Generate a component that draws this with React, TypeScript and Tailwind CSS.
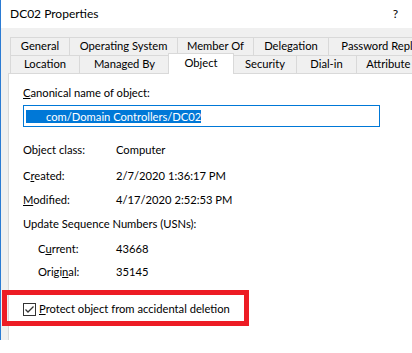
import React from "react";

const ROW1 = [
  { label: "General", w: "w-[60px]" },
  { label: "Operating System", w: "w-[108px]" },
  { label: "Member Of", w: "w-[76px]" },
  { label: "Delegation", w: "w-[75px]" },
  { label: "Password Replication", w: "w-[130px]" },
];

const ROW2_LEFT = [
  { label: "Location", w: "w-[70px]" },
  { label: "Managed By", w: "w-[90px]" },
];

const ROW2_RIGHT = [
  { label: "Security", w: "w-[63px]" },
  { label: "Dial-in", w: "w-[60px]" },
  { label: "Attribute Editor", w: "w-[96px]" },
];

function Tab({ label, w, first }: { label: string; w: string; first?: boolean }) {
  return (
    <div
      className={`${w} h-[18px] shrink-0 border-t border-r border-[#d9d9d9] ${
        first ? "border-l" : ""
      } flex items-center justify-center whitespace-nowrap overflow-hidden`}
    >
      {label}
    </div>
  );
}

function Field({ label, value, indent }: { label: React.ReactNode; value: string; indent?: boolean }) {
  return (
    <div className="flex h-[16px] items-center">
      <div className={`w-[93px] ${indent ? "pl-[15px]" : ""}`}>{label}</div>
      <div>{value}</div>
    </div>
  );
}

export default function App() {
  return (
    <div className="relative w-[412px] h-[353px] overflow-hidden bg-white text-[11.2px] text-black font-['Lato','Liberation_Sans',sans-serif]">
      <div className="h-[340px] border-l border-[#2b7bd3] flex flex-col">
        {/* Title bar */}
        <div className="h-[28px] flex items-center justify-between bg-white pl-[9px] pr-[14px] text-[12px]">
          <span>DC02 Properties</span>
          <span>?</span>
        </div>

        <div className="flex-1 bg-[#f0f0f0] pt-[9px] flex flex-col">
          {/* Tabs row 1 */}
          <div className="flex pl-[9px]">
            {ROW1.map((t, i) => (
              <Tab key={t.label} label={t.label} w={t.w} first={i === 0} />
            ))}
          </div>
          {/* Tabs row 2 */}
          <div className="flex items-start pl-[9px] h-[18px]">
            {ROW2_LEFT.map((t, i) => (
              <Tab key={t.label} label={t.label} w={t.w} first={i === 0} />
            ))}
            <div className="relative z-10 -ml-[2px] -mt-[2px] w-[66px] h-[21px] shrink-0 bg-white border-t border-l border-r border-[#d9d9d9] flex justify-center pt-[1px]">
              Object
            </div>
            {ROW2_RIGHT.map((t) => (
              <Tab key={t.label} label={t.label} w={t.w} />
            ))}
          </div>

          {/* Panel */}
          <div className="flex-1 ml-[7px] bg-white border-t border-l border-[#d9d9d9] pl-[14px] pt-[11px] flex flex-col">
            <div className="h-[16px] flex items-center">
              <span>
                <span className="underline">C</span>anonical name of object:
              </span>
            </div>
            <div className="mt-[4px] w-[357px] h-[22px] border border-[#0078d7] flex items-center pl-[2px]">
              <span className="h-[13px] leading-[13px] bg-[#0078d7] text-white pl-[20px] whitespace-nowrap">
                com/Domain Controllers/DC02
              </span>
            </div>

            <div className="mt-[15px] flex flex-col">
              <Field label="Object class:" value="Computer" />
              <div className="mt-[10px]">
                <Field
                  label={
                    <span>
                      C<span className="underline">r</span>eated:
                    </span>
                  }
                  value="2/7/2020 1:36:17 PM"
                />
              </div>
              <div className="mt-[8px]">
                <Field
                  label={
                    <span>
                      <span className="underline">M</span>odified:
                    </span>
                  }
                  value="4/17/2020 2:52:53 PM"
                />
              </div>
              <div className="mt-[8px] h-[16px] flex items-center">
                Update Sequence Numbers (USNs):
              </div>
              <div className="mt-[9px]">
                <Field
                  indent
                  label={
                    <span>
                      C<span className="underline">u</span>rrent:
                    </span>
                  }
                  value="43668"
                />
              </div>
              <div className="mt-[7px]">
                <Field
                  indent
                  label={
                    <span>
                      Origi<span className="underline">n</span>al:
                    </span>
                  }
                  value="35145"
                />
              </div>
            </div>

            {/* Checkbox */}
            <div className="mt-[21px] h-[16px] flex items-center gap-[3px]">
              <div className="w-[13px] h-[13px] border border-[#333333] bg-white flex items-center justify-center">
                <svg width="11" height="11" viewBox="0 0 11 11">
                  <polyline points="1.5,5.5 4,8 9.5,2.5" fill="none" stroke="#333333" strokeWidth="1.3" />
                </svg>
              </div>
              <span>
                <span className="underline">P</span>rotect object from accidental deletion
              </span>
            </div>
          </div>
        </div>
      </div>

      {/* Red annotation box */}
      <div className="absolute left-[2px] top-[290px] w-[247px] h-[36px] border-[5px] border-[#ed1c24]" />
    </div>
  );
}
